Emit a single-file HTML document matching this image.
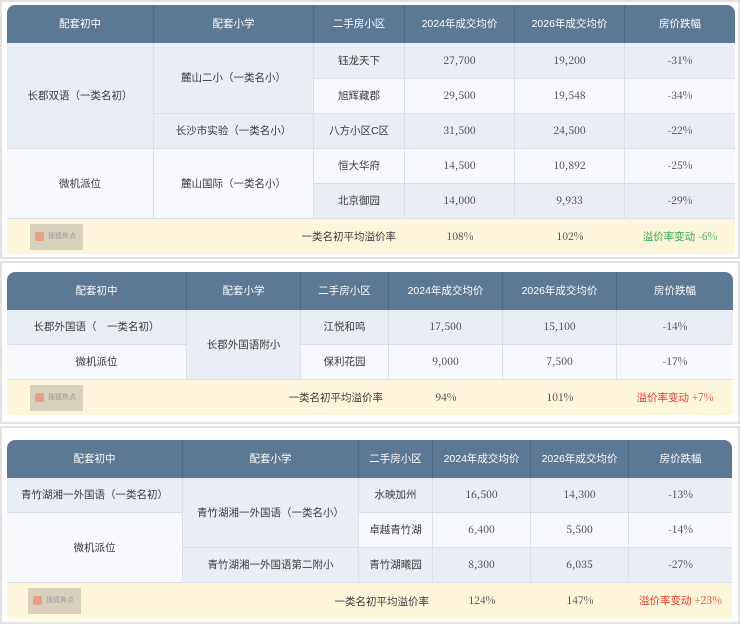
<!DOCTYPE html>
<html><head><meta charset="utf-8"><style>
*{margin:0;padding:0;box-sizing:border-box}
body{width:740px;height:624px;background:#fff;font-family:"Liberation Sans","Noto Sans CJK SC",sans-serif;font-size:10.5px;color:#3a3a3a;position:relative;overflow:hidden}
.panel{position:absolute;left:0;width:740px;border:2px solid #e2e2e2;background:#fff}
table{position:absolute;left:7px;border-collapse:separate;border-spacing:0;table-layout:fixed;border-radius:8px 8px 4px 4px;overflow:hidden}
td,th{text-align:center;vertical-align:middle;border-right:1px solid #d9e0ea;border-bottom:1px solid #d9e0ea;padding:0;line-height:14px}
th{background:#5b7895;color:#fff;font-weight:normal;border-right:1px solid #4f6a86;border-bottom:none}
tr td:last-child,tr th:last-child{border-right:none}
.l{background:#e9eef5}.w{background:#f7f9fc}
.n{font-family:"Noto Serif CJK SC","Liberation Serif",serif;font-size:10.5px}
.f td{background:#fdf6da;border:none;font-size:10.5px}
.wm{display:inline-block;width:53px;height:26px;background:#d8d2bd;vertical-align:middle;position:relative;font-size:7px;color:#9a9a9a;line-height:26px;padding-left:18px}
.wm:before{content:"";position:absolute;left:5px;top:8px;width:9px;height:9px;background:#e6a08a;border-radius:2px}
.g{color:#2ea84a}.r{color:#e5392f}
</style></head><body>
<div class="panel" style="top:0;height:259px"></div>
<div class="panel" style="top:261px;height:163px"></div>
<div class="panel" style="top:426px;height:198px"></div>

<table style="top:5px;width:728px">
<colgroup><col style="width:147px"><col style="width:160px"><col style="width:91px"><col style="width:110px"><col style="width:110px"><col style="width:110px"></colgroup>
<tr style="height:38px"><th>配套初中</th><th>配套小学</th><th>二手房小区</th><th>2024年成交均价</th><th>2026年成交均价</th><th>房价跌幅</th></tr>
<tr style="height:36px" class="l"><td rowspan="3" class="l">长郡双语（一类名初）</td><td rowspan="2" class="l">麓山二小（一类名小）</td><td class="l">钰龙天下</td><td class="n l">27,700</td><td class="n l">19,200</td><td class="n l">-31%</td></tr>
<tr style="height:35px"><td class="w">旭辉藏郡</td><td class="n w">29,500</td><td class="n w">19,548</td><td class="n w">-34%</td></tr>
<tr style="height:35px"><td class="l">长沙市实验（一类名小）</td><td class="l">八方小区C区</td><td class="n l">31,500</td><td class="n l">24,500</td><td class="n l">-22%</td></tr>
<tr style="height:35px"><td rowspan="2" class="w">微机派位</td><td rowspan="2" class="w">麓山国际（一类名小）</td><td class="w">恒大华府</td><td class="n w">14,500</td><td class="n w">10,892</td><td class="n w">-25%</td></tr>
<tr style="height:35px"><td class="l">北京御园</td><td class="n l">14,000</td><td class="n l">9,933</td><td class="n l">-29%</td></tr>
<tr style="height:35px" class="f"><td colspan="3" style="text-align:left;position:relative"><span class="wm" style="margin-left:23px">搜狐焦点</span><span style="position:absolute;right:9px;top:11px">一类名初平均溢价率</span></td><td class="n">108%</td><td class="n">102%</td><td class="g">溢价率变动 <span class="n">-6%</span></td></tr>
</table>

<table style="top:272px;width:726px">
<colgroup><col style="width:180px"><col style="width:114px"><col style="width:88px"><col style="width:114px"><col style="width:114px"><col style="width:116px"></colgroup>
<tr style="height:38px"><th>配套初中</th><th>配套小学</th><th>二手房小区</th><th>2024年成交均价</th><th>2026年成交均价</th><th>房价跌幅</th></tr>
<tr style="height:35px"><td class="l">长郡外国语（　一类名初）</td><td rowspan="2" class="l">长郡外国语附小</td><td class="l">江悦和鸣</td><td class="n l">17,500</td><td class="n l">15,100</td><td class="n l">-14%</td></tr>
<tr style="height:35px"><td class="w">微机派位</td><td class="w">保利花园</td><td class="n w">9,000</td><td class="n w">7,500</td><td class="n w">-17%</td></tr>
<tr style="height:35px" class="f"><td colspan="3" style="text-align:left;position:relative"><span class="wm" style="margin-left:23px">搜狐焦点</span><span style="position:absolute;right:6px;top:11px">一类名初平均溢价率</span></td><td class="n">94%</td><td class="n">101%</td><td class="r">溢价率变动 <span class="n">+7%</span></td></tr>
</table>

<table style="top:440px;width:725px">
<colgroup><col style="width:176px"><col style="width:176px"><col style="width:74px"><col style="width:98px"><col style="width:98px"><col style="width:103px"></colgroup>
<tr style="height:38px"><th>配套初中</th><th>配套小学</th><th>二手房小区</th><th>2024年成交均价</th><th>2026年成交均价</th><th>房价跌幅</th></tr>
<tr style="height:35px"><td class="l">青竹湖湘一外国语（一类名初）</td><td rowspan="2" class="l">青竹湖湘一外国语（一类名小）</td><td class="l">水映加州</td><td class="n l">16,500</td><td class="n l">14,300</td><td class="n l">-13%</td></tr>
<tr style="height:35px"><td rowspan="2" class="w">微机派位</td><td class="w">卓越青竹湖</td><td class="n w">6,400</td><td class="n w">5,500</td><td class="n w">-14%</td></tr>
<tr style="height:35px"><td class="l">青竹湖湘一外国语第二附小</td><td class="l">青竹湖曦园</td><td class="n l">8,300</td><td class="n l">6,035</td><td class="n l">-27%</td></tr>
<tr style="height:36px" class="f"><td colspan="3" style="text-align:left;position:relative"><span class="wm" style="margin-left:21px">搜狐焦点</span><span style="position:absolute;right:4px;top:12px">一类名初平均溢价率</span></td><td class="n">124%</td><td class="n">147%</td><td class="r">溢价率变动 <span class="n">+23%</span></td></tr>
</table>
</body></html>
